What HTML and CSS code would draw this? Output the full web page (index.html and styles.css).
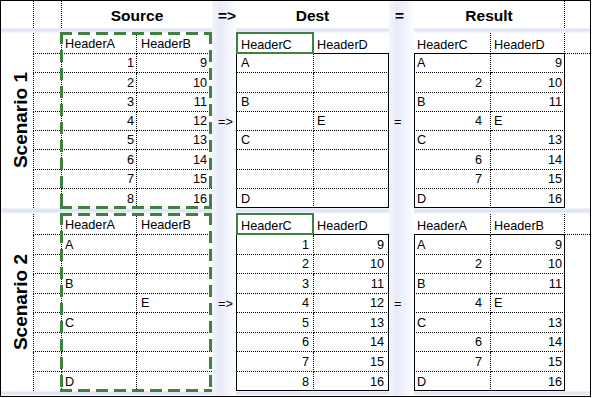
FILE: index.html
```html
<!DOCTYPE html>
<html lang="en">
<head>
<meta charset="utf-8">
<title>Scenarios</title>
<link rel="stylesheet" href="styles.css">
</head>
<body>
<div class="sheet">
  <div class="hband r2"></div>
  <div class="hband r4"></div>
  <div class="hband r6"></div>
  <div class="vband e"></div>
  <div class="vband h"></div>

  <div class="t-gut"></div>
  <div class="title t-src">Source</div>
  <div class="t-op t-arrow">=&gt;</div>
  <div class="title t-dest">Dest</div>
  <div class="t-op t-eq">=</div>
  <div class="title t-res">Result</div>

  <section class="scenario s1">
    <div class="label"><span>Scenario 1</span></div>
    <div class="gutter"><div></div><div></div><div></div><div></div><div></div><div></div><div></div><div></div><div></div></div>
    <div class="tbl src">
      <div class="cells">
        <div class="c">HeaderA</div><div class="c">HeaderB</div>
        <div class="c n">1</div><div class="c n">9</div>
        <div class="c n">2</div><div class="c n">10</div>
        <div class="c n">3</div><div class="c n">11</div>
        <div class="c n">4</div><div class="c n">12</div>
        <div class="c n">5</div><div class="c n">13</div>
        <div class="c n">6</div><div class="c n">14</div>
        <div class="c n">7</div><div class="c n">15</div>
        <div class="c n">8</div><div class="c n">16</div>
      </div>
      <div class="ants"></div>
    </div>
    <div class="op arrow">=&gt;</div>
    <div class="tbl dest">
      <div class="cells">
        <div class="c">HeaderC</div><div class="c">HeaderD</div>
        <div class="c">A</div><div class="c"></div>
        <div class="c"></div><div class="c"></div>
        <div class="c">B</div><div class="c"></div>
        <div class="c"></div><div class="c">E</div>
        <div class="c">C</div><div class="c"></div>
        <div class="c"></div><div class="c"></div>
        <div class="c"></div><div class="c"></div>
        <div class="c">D</div><div class="c"></div>
      </div>
      <div class="frame"></div>
      <div class="selbox"></div>
    </div>
    <div class="op eq">=</div>
    <div class="tbl res">
      <div class="cells">
        <div class="c">HeaderC</div><div class="c">HeaderD</div>
        <div class="c">A</div><div class="c n">9</div>
        <div class="c n">2</div><div class="c n">10</div>
        <div class="c">B</div><div class="c n">11</div>
        <div class="c n">4</div><div class="c">E</div>
        <div class="c">C</div><div class="c n">13</div>
        <div class="c n">6</div><div class="c n">14</div>
        <div class="c n">7</div><div class="c n">15</div>
        <div class="c">D</div><div class="c n">16</div>
      </div>
      <div class="frame"></div>
    </div>
    <div class="corner"></div>
  </section>

  <section class="scenario s2">
    <div class="label"><span>Scenario 2</span></div>
    <div class="gutter"><div></div><div></div><div></div><div></div><div></div><div></div><div></div><div></div><div></div></div>
    <div class="tbl src">
      <div class="cells">
        <div class="c">HeaderA</div><div class="c">HeaderB</div>
        <div class="c">A</div><div class="c"></div>
        <div class="c"></div><div class="c"></div>
        <div class="c">B</div><div class="c"></div>
        <div class="c"></div><div class="c">E</div>
        <div class="c">C</div><div class="c"></div>
        <div class="c"></div><div class="c"></div>
        <div class="c"></div><div class="c"></div>
        <div class="c">D</div><div class="c"></div>
      </div>
      <div class="ants"></div>
    </div>
    <div class="op arrow">=&gt;</div>
    <div class="tbl dest">
      <div class="cells">
        <div class="c">HeaderC</div><div class="c">HeaderD</div>
        <div class="c n">1</div><div class="c n">9</div>
        <div class="c n">2</div><div class="c n">10</div>
        <div class="c n">3</div><div class="c n">11</div>
        <div class="c n">4</div><div class="c n">12</div>
        <div class="c n">5</div><div class="c n">13</div>
        <div class="c n">6</div><div class="c n">14</div>
        <div class="c n">7</div><div class="c n">15</div>
        <div class="c n">8</div><div class="c n">16</div>
      </div>
      <div class="frame"></div>
      <div class="selbox"></div>
    </div>
    <div class="op eq">=</div>
    <div class="tbl res">
      <div class="cells">
        <div class="c">HeaderA</div><div class="c">HeaderB</div>
        <div class="c">A</div><div class="c n">9</div>
        <div class="c n">2</div><div class="c n">10</div>
        <div class="c">B</div><div class="c n">11</div>
        <div class="c n">4</div><div class="c">E</div>
        <div class="c">C</div><div class="c n">13</div>
        <div class="c n">6</div><div class="c n">14</div>
        <div class="c n">7</div><div class="c n">15</div>
        <div class="c">D</div><div class="c n">16</div>
      </div>
      <div class="frame"></div>
    </div>
    <div class="corner"></div>
  </section>
</div>
</body>
</html>
```
FILE: styles.css
```css
html, body {
  margin: 0;
  padding: 0;
  background: #fff;
}

body {
  font-family: "Liberation Sans", Arial, sans-serif;
  font-size: 12.7px;
  color: #000;
}

.sheet {
  --cols: 32px 29px 75px 75px 24px 78px 75px 25px 77px 74px 25px;
  --rows: 21px repeat(8, 1fr);
  --green: #41813f;
  display: grid;
  grid-template-columns: var(--cols);
  grid-template-rows: 27px 5px 175px 6px 177px 5px;
  width: max-content;
  border: 1px solid #000;
}

/* soft separator bands */
.hband {
  grid-column: 1 / -1;
  background: linear-gradient(180deg, #f1f4fb 0%, #dce2f3 40%, #e8ecf7 70%, #fbfcfe 100%);
}
.hband.r2 { grid-row: 2; }
.hband.r4 { grid-row: 4; }
.hband.r6 { grid-row: 6; }

.vband {
  grid-row: 1 / -1;
  background: linear-gradient(90deg, #f4f6fc 0%, #e7ebf8 30%, #f0f2fb 62%, #fefeff 100%);
}
.vband.e { grid-column: 5; }
.vband.h { grid-column: 8; }

/* title row */
.t-gut {
  grid-column: 2;
  grid-row: 1;
  border-left: 1px dotted #000;
  border-right: 1px dotted #000;
}

.title {
  grid-row: 1;
  display: flex;
  align-items: center;
  justify-content: center;
  padding-top: 2px;
  font-weight: bold;
  font-size: 15.5px;
}
.t-src { grid-column: 3 / 5; }
.t-dest { grid-column: 6 / 8; }
.t-res { grid-column: 9 / 11; border-right: 1px dotted #000; }

.t-op {
  grid-row: 1;
  display: flex;
  align-items: center;
  padding: 2px 0 0 6px;
  font-weight: bold;
  font-size: 15.5px;
}
.t-arrow { grid-column: 5; }
.t-eq { grid-column: 8; }

/* scenario blocks */
.scenario {
  grid-column: 1 / -1;
  display: grid;
  grid-template-columns: var(--cols);
  grid-template-rows: var(--rows);
}
.s1 { grid-row: 3; }
.s2 { grid-row: 5; }

.label {
  grid-column: 1;
  grid-row: 1 / -1;
  display: flex;
  align-items: center;
  justify-content: center;
}
.label span {
  writing-mode: vertical-rl;
  transform: rotate(180deg);
  font-weight: bold;
  font-size: 19px;
  margin-left: 7px;
  white-space: nowrap;
}

.gutter {
  grid-column: 2;
  grid-row: 1 / -1;
  display: grid;
  grid-template-rows: var(--rows);
}
.gutter > div {
  border-left: 1px dotted #000;
  border-right: 1px dotted #000;
  border-bottom: 1px dotted #000;
}
.gutter > div:last-child { border-bottom: 0; }

.tbl {
  grid-row: 1 / -1;
  display: grid;
  grid-template-rows: var(--rows);
}
.tbl.src { grid-column: 3 / 5; grid-template-columns: 75px 75px; }
.tbl.dest { grid-column: 6 / 8; grid-template-columns: 78px 75px; }
.tbl.res { grid-column: 9 / 11; grid-template-columns: 77px 74px; }

.cells {
  grid-column: 1 / -1;
  grid-row: 1 / -1;
  display: grid;
  grid-template-columns: inherit;
  grid-template-rows: inherit;
}

.c {
  display: flex;
  align-items: flex-end;
  min-width: 0;
  padding: 0 2px 1px 3px;
  line-height: 15px;
  white-space: nowrap;
  border-bottom: 1px dotted #000;
}
.c.n { justify-content: flex-end; }
.c:nth-child(odd) { border-right: 1px dotted #000; }
.c:nth-child(17), .c:nth-child(18) { border-bottom: 0; }

.dest .c:nth-child(-n+2),
.res .c:nth-child(-n+2) { border-bottom: 0; }
.dest .c:nth-child(1) { border-right: 0; }
.res .c:nth-child(2) { border-right: 1px dotted #000; }

.src .c:nth-child(even) { padding-left: 4px; }
.src .c.n:nth-child(even) { padding-right: 5px; }
.dest .c:nth-child(odd) { padding-left: 5px; }
.dest .c.n:nth-child(odd) { padding-right: 4px; }
.dest .c.n:nth-child(even) { padding-right: 5px; }
.res .c.n:nth-child(odd) { padding-right: 8px; }
.res .c.n:nth-child(even) { padding-right: 3px; }

.frame {
  grid-column: 1 / -1;
  grid-row: 2 / -1;
  margin-top: -1px;
  border: 1px solid #000;
}

.selbox {
  grid-column: 1;
  grid-row: 1;
  margin-top: -1px;
  border: 2px solid var(--green);
}

.ants {
  grid-column: 1 / -1;
  grid-row: 1 / -1;
  margin: -1px 0 -1px -2px;
  background:
    repeating-linear-gradient(90deg, var(--green) 0 12px, transparent 12px 18px) left top / 100% 3px no-repeat,
    repeating-linear-gradient(90deg, var(--green) 0 12px, transparent 12px 18px) left bottom / 100% 3px no-repeat,
    repeating-linear-gradient(180deg, var(--green) 0 12px, transparent 12px 18px) left top / 3px 100% no-repeat,
    repeating-linear-gradient(180deg, var(--green) 0 12px, transparent 12px 18px) right top / 3px 100% no-repeat;
}

.op {
  grid-row: 5;
  display: flex;
  align-items: flex-end;
  padding: 0 0 1px 6px;
  line-height: 15px;
}
.op.arrow { grid-column: 5; }
.op.eq { grid-column: 8; padding-left: 5px; }

.corner {
  grid-column: 11;
  grid-row: 1;
  border-bottom: 1px dotted #000;
}
```
